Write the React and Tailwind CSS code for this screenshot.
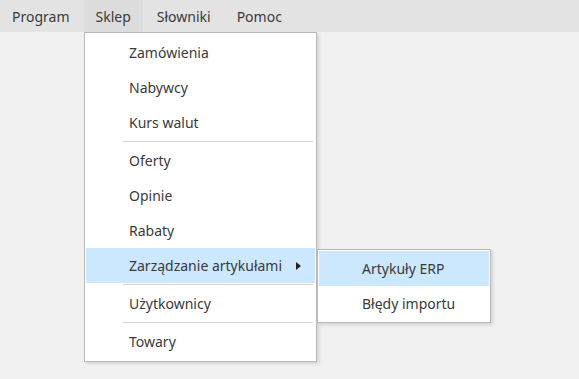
import React from "react";

const topMenu = ["Program", "Sklep", "Słowniki", "Pomoc"];

const MenuItem = ({ label, active, arrow }) => (
  <div
    className={
      "relative mx-px flex h-[35px] items-center pl-[43px] pr-3 " +
      (active ? "bg-[#cce8ff]" : "")
    }
  >
    <span>{label}</span>
    {arrow && (
      <svg
        className="absolute right-[14px] top-[14px]"
        width="5"
        height="8"
        viewBox="0 0 5 8"
      >
        <path d="M0 0 L5 4 L0 8 Z" fill="#222" />
      </svg>
    )}
  </div>
);

const Separator = () => (
  <div className="flex h-[3px] items-center pl-[38px] pr-[3px]">
    <div className="h-px w-full bg-[#d7d7d7]" />
  </div>
);

export default function App() {
  return (
    <div
      className="relative h-[379px] w-[579px] overflow-hidden bg-[#f0f0f0] text-[14px] text-[#3a3a3a]"
      style={{ fontFamily: '"Noto Sans", "Open Sans", sans-serif' }}
    >
      <div className="flex h-8 items-center bg-[#e3e3e3]">
        {topMenu.map((m, i) => (
          <div
            key={m}
            className={
              "flex h-full items-center px-3 " +
              (i === 0 ? "" : "ml-0.5 ") +
              (i === 1 ? "bg-[#dcdcdc]" : "")
            }
          >
            {m}
          </div>
        ))}
      </div>

      <div className="absolute left-[84px] top-[32px] w-[233px] border border-[#b9b9b9] bg-white py-[2px] shadow-[2px_2px_3px_rgba(0,0,0,0.12)]">
        <MenuItem label="Zamówienia" />
        <MenuItem label="Nabywcy" />
        <MenuItem label="Kurs walut" />
        <Separator />
        <MenuItem label="Oferty" />
        <MenuItem label="Opinie" />
        <MenuItem label="Rabaty" />
        <MenuItem label="Zarządzanie artykułami" active arrow />
        <Separator />
        <MenuItem label="Użytkownicy" />
        <Separator />
        <MenuItem label="Towary" />
      </div>

      <div className="absolute left-[317px] top-[249px] w-[174px] border border-[#b9b9b9] bg-white py-px shadow-[2px_2px_3px_rgba(0,0,0,0.12)]">
        <MenuItem label="Artykuły ERP" active />
        <MenuItem label="Błędy importu" />
      </div>
    </div>
  );
}
